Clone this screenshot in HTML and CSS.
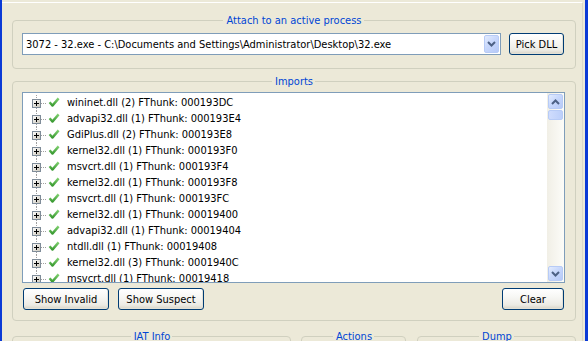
FILE: index.html
```html
<!DOCTYPE html>
<html>
<head>
<meta charset="utf-8">
<link rel="stylesheet" href="styles.css">
</head>
<body>
<div class="window">
  <div class="client">
    <section class="group attach">
      <div class="group-title"><span>Attach to an active process</span></div>
      <div class="attach-row">
        <div class="combo">
          <span class="combo-text">3072 - 32.exe - C:\Documents and Settings\Administrator\Desktop\32.exe</span>
          <span class="xp-arrow-btn combo-btn"><svg width="9" height="6" viewBox="0 0 9 6"><polyline points="1,1 4.5,4.5 8,1" fill="none" stroke="#4d6185" stroke-width="2"/></svg></span>
        </div>
        <button class="btn pick">Pick DLL</button>
      </div>
    </section>

    <section class="group imports">
      <div class="group-title"><span>Imports</span></div>
      <div class="listbox">
        <div class="tree">
          <div class="row"><svg class="node" width="44" height="16"><use href="#node"/></svg><span>wininet.dll (2) FThunk: 000193DC</span></div>
          <div class="row"><svg class="node" width="44" height="16"><use href="#node"/></svg><span>advapi32.dll (1) FThunk: 000193E4</span></div>
          <div class="row"><svg class="node" width="44" height="16"><use href="#node"/></svg><span>GdiPlus.dll (2) FThunk: 000193E8</span></div>
          <div class="row"><svg class="node" width="44" height="16"><use href="#node"/></svg><span>kernel32.dll (1) FThunk: 000193F0</span></div>
          <div class="row"><svg class="node" width="44" height="16"><use href="#node"/></svg><span>msvcrt.dll (1) FThunk: 000193F4</span></div>
          <div class="row"><svg class="node" width="44" height="16"><use href="#node"/></svg><span>kernel32.dll (1) FThunk: 000193F8</span></div>
          <div class="row"><svg class="node" width="44" height="16"><use href="#node"/></svg><span>msvcrt.dll (1) FThunk: 000193FC</span></div>
          <div class="row"><svg class="node" width="44" height="16"><use href="#node"/></svg><span>kernel32.dll (1) FThunk: 00019400</span></div>
          <div class="row"><svg class="node" width="44" height="16"><use href="#node"/></svg><span>advapi32.dll (1) FThunk: 00019404</span></div>
          <div class="row"><svg class="node" width="44" height="16"><use href="#node"/></svg><span>ntdll.dll (1) FThunk: 00019408</span></div>
          <div class="row"><svg class="node" width="44" height="16"><use href="#node"/></svg><span>kernel32.dll (3) FThunk: 0001940C</span></div>
          <div class="row"><svg class="node" width="44" height="16"><use href="#node"/></svg><span>msvcrt.dll (1) FThunk: 00019418</span></div>
        </div>
        <div class="vscroll">
          <span class="xp-arrow-btn sb-btn"><svg width="9" height="6" viewBox="0 0 9 6"><polyline points="1,5 4.5,1.5 8,5" fill="none" stroke="#4d6185" stroke-width="2"/></svg></span>
          <span class="sb-thumb"></span>
          <span class="sb-track"></span>
          <span class="xp-arrow-btn sb-btn"><svg width="9" height="6" viewBox="0 0 9 6"><polyline points="1,1 4.5,4.5 8,1" fill="none" stroke="#4d6185" stroke-width="2"/></svg></span>
        </div>
      </div>
      <div class="btn-row">
        <button class="btn wide">Show Invalid</button>
        <button class="btn wide">Show Suspect</button>
        <span class="spacer"></span>
        <button class="btn clear">Clear</button>
      </div>
    </section>

    <div class="bottom-groups">
      <section class="group iat"><div class="group-title"><span>IAT Info</span></div></section>
      <section class="group actions"><div class="group-title"><span>Actions</span></div></section>
      <section class="group dump"><div class="group-title"><span>Dump</span></div></section>
    </div>
  </div>
</div>

<svg width="0" height="0" class="defs">
  <defs>
    <linearGradient id="boxfill" x1="0" y1="0" x2="1" y2="1">
      <stop offset="0" stop-color="#ffffff"/>
      <stop offset="1" stop-color="#c9c5b8"/>
    </linearGradient>
    <linearGradient id="chk" x1="0" y1="0" x2="0" y2="1">
      <stop offset="0" stop-color="#7fd06f"/>
      <stop offset="1" stop-color="#3a9a32"/>
    </linearGradient>
    <g id="node">
      <line x1="13.5" y1="0" x2="13.5" y2="4" stroke="#a0a0a0" stroke-dasharray="1 1"/>
      <line x1="13.5" y1="13" x2="13.5" y2="16" stroke="#a0a0a0" stroke-dasharray="1 1"/>
      <line x1="18" y1="8.5" x2="24" y2="8.5" stroke="#a0a0a0" stroke-dasharray="1 1"/>
      <rect x="9.5" y="4.5" width="8" height="8" fill="url(#boxfill)" stroke="#7f8c99"/>
      <line x1="11" y1="8.5" x2="16" y2="8.5" stroke="#000"/>
      <line x1="13.5" y1="6" x2="13.5" y2="11" stroke="#000"/>
      <path d="M26.6 7.2 L29.4 10.6 L35.6 3.4" fill="none" stroke="url(#chk)" stroke-width="2.4" stroke-linejoin="round"/>
    </g>
  </defs>
</svg>
</body>
</html>
```

FILE: styles.css
```css
* { box-sizing: border-box; }

html, body {
  margin: 0;
  padding: 0;
  width: 588px;
  height: 341px;
  overflow: hidden;
  background: #ece9d8;
}

.defs { position: absolute; }

.window {
  width: 588px;
  height: 341px;
  border-left: 2px solid #0b3ad6;
  border-right: 3px solid #0b3ad6;
  padding-top: 2px;
  padding-right: 2px;
  background: #ece9d8;
  font-family: "DejaVu Sans Condensed", "DejaVu Sans", sans-serif;
  font-size: 11px;
  color: #000;
  overflow: hidden;
}

.client {
  height: 100%;
  border-top: 1px solid #ffffff;
  border-right: 1px solid #dcd8c8;
  padding: 17px 6px 0 10px;
}

.group {
  border: 1px solid #d0d0bf;
  border-radius: 4px;
}

.group-title {
  display: flex;
  justify-content: center;
  margin-top: -7px;
  height: 14px;
  line-height: 14px;
  color: #0046d5;
}

.group-title span {
  background: #ece9d8;
  padding: 0 2px 0 3px;
}

/* Attach */
.attach {
  padding: 0 10px 13px 9px;
}

.attach-row {
  display: flex;
  gap: 8px;
  margin-top: 5px;
}

.combo {
  flex: 1;
  height: 22px;
  border: 1px solid #7f9db9;
  background: #fff;
  display: flex;
  align-items: center;
  padding: 1px;
}

.combo-text {
  flex: 1;
  padding-left: 2px;
  white-space: nowrap;
  overflow: hidden;
}

.xp-arrow-btn {
  display: flex;
  align-items: center;
  justify-content: center;
  border: 1px solid #b7cbf6;
  border-radius: 2px;
  background: linear-gradient(135deg, #e3ecfe 0%, #c8d8fc 45%, #b6c9f7 100%);
}

.combo-btn {
  width: 15px;
  height: 18px;
}

.btn {
  font: inherit;
  color: #000;
  height: 22px;
  border: 1px solid #003c74;
  border-radius: 3px;
  background: linear-gradient(#ffffff 0%, #f7f7f4 40%, #ecebe4 80%, #d8d3c6 100%);
  padding: 0;
  box-shadow: inset -1px -1px 0 #e3e1d6;
}

.pick {
  width: 55px;
  margin-right: 1px;
}

/* Imports */
.imports {
  margin-top: 12px;
  padding: 0 10px 10px 9px;
}

.listbox {
  margin-top: 3px;
  height: 191px;
  border: 1px solid #7f9db9;
  background: #fff;
  display: flex;
}

.tree {
  flex: 1;
  overflow: hidden;
  padding-top: 2px;
}

.row {
  display: flex;
  align-items: center;
  height: 16px;
  line-height: 16px;
  white-space: nowrap;
}

.node {
  flex: none;
  display: block;
}

.vscroll {
  width: 17px;
  display: flex;
  flex-direction: column;
  background: linear-gradient(to right, #f1efe6, #fcfcf8);
}

.sb-btn {
  width: 15px;
  height: 15px;
  margin: 1px;
}

.sb-thumb {
  height: 10px;
  margin: 0 1px;
  border: 1px solid #b7cbf6;
  border-radius: 2px;
  background: linear-gradient(to right, #cfdcfd, #bccffa);
}

.sb-track { flex: 1; }

.btn-row {
  display: flex;
  gap: 9px;
  margin-top: 5px;
  padding-left: 1px;
}

.wide { width: 86px; }

.spacer { flex: 1; }

.clear {
  width: 62px;
  margin-right: 1px;
}

/* Bottom groups */
.bottom-groups {
  display: flex;
  gap: 10px;
  margin-top: 15px;
}

.bottom-groups .group { height: 60px; }

.iat { width: 279px; }
.actions { width: 105px; margin-right: 1px; }
.dump { flex: 1; }
```
